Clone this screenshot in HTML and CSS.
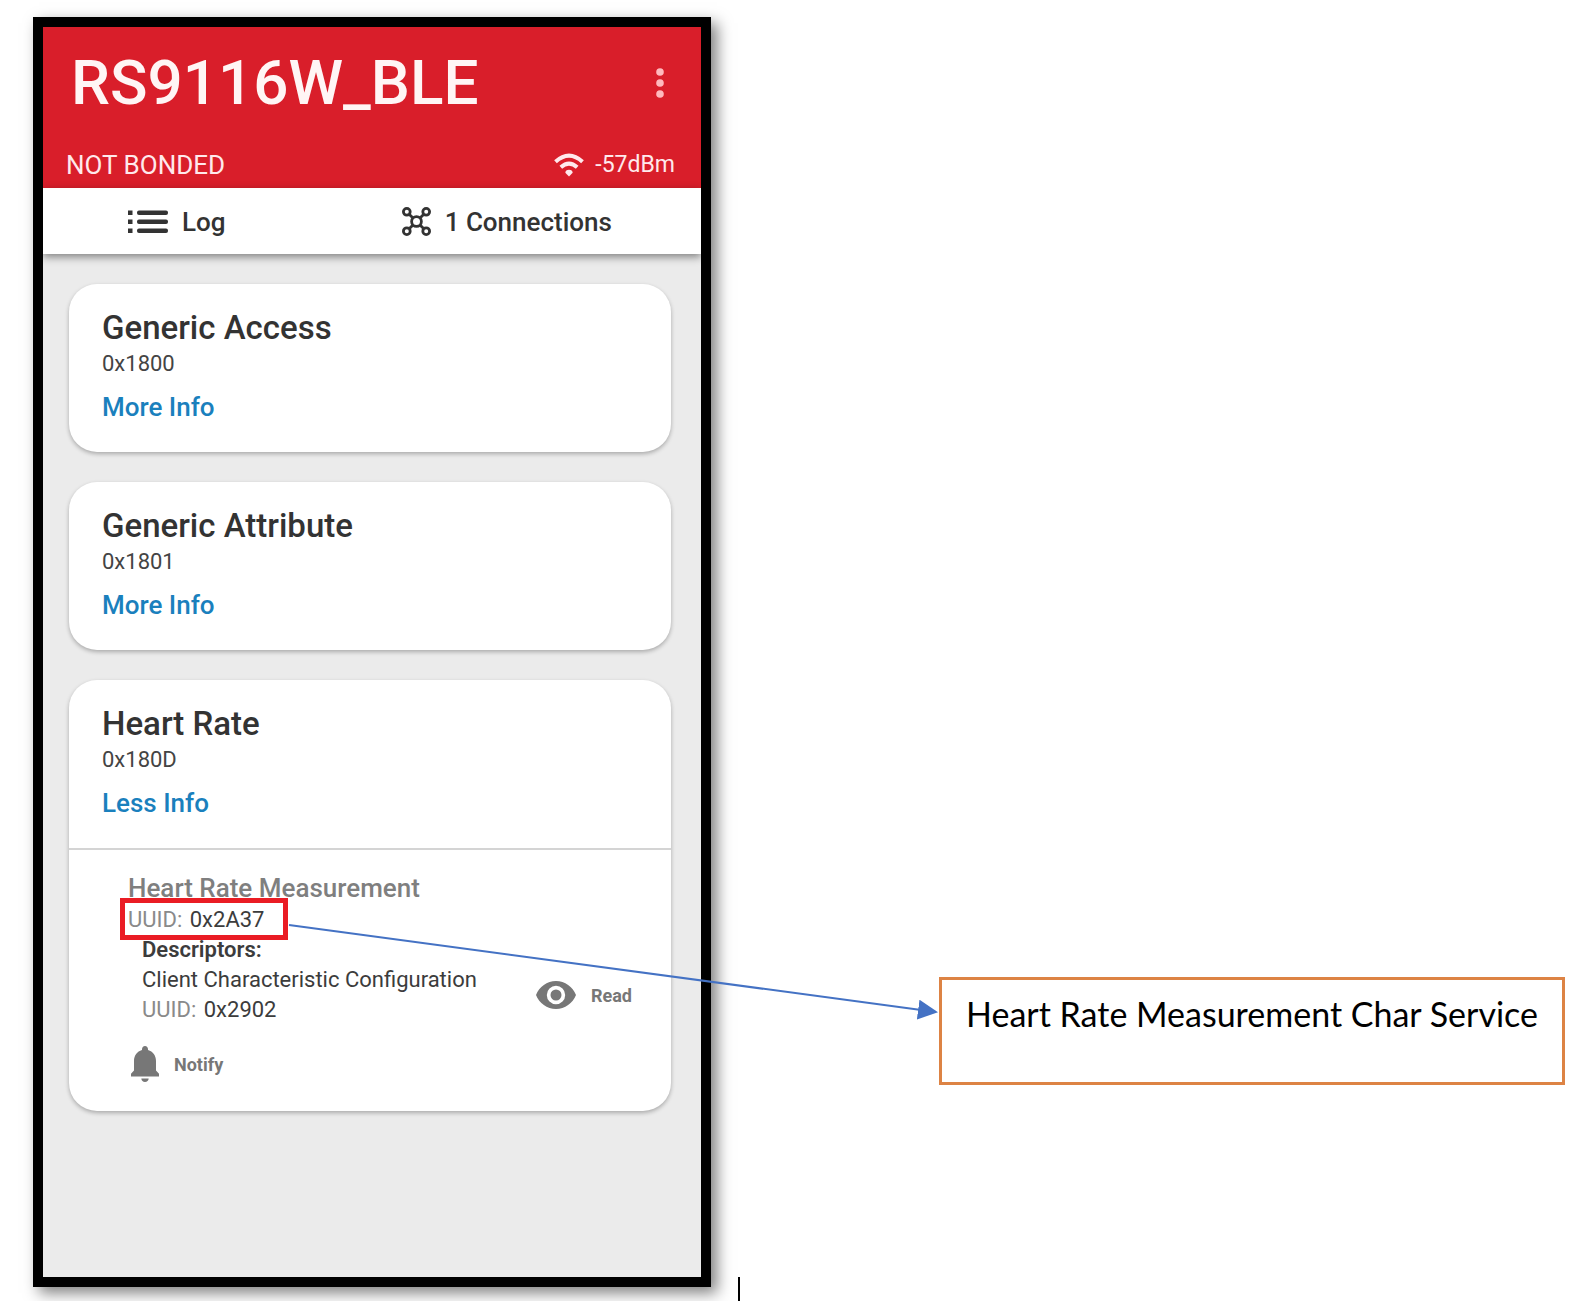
FILE: index.html
```html
<!DOCTYPE html>
<html lang="en">
<head>
<meta charset="utf-8">
<meta name="viewport" content="width=device-width, initial-scale=1">
<title>RS9116W_BLE</title>
<link rel="stylesheet" href="styles.css">
</head>
<body>
<main class="stage">
  <section class="phone">
    <header class="header">
      <div class="header-top">
        <h1 class="device">RS9116W_BLE</h1>
        <button class="menu" type="button" aria-label="More options">
          <svg width="8" height="32" viewBox="0 0 8 32" fill="currentColor"><circle cx="4" cy="5" r="3.8"/><circle cx="4" cy="16" r="3.8"/><circle cx="4" cy="27" r="3.8"/></svg>
        </button>
      </div>
      <div class="status">
        <span class="bond">NOT BONDED</span>
        <span class="signal">
          <svg width="30" height="24" viewBox="0 0 30 24" fill="none" stroke="currentColor" stroke-width="4"><path d="M1.500 8.700Q15-3.600 28.500 8.700"/><path d="M6.800 14.300Q15 7 23.200 14.300"/><path d="M15 23.500L11.300 19.800Q11.500 16.800 15 16.800Q18.500 16.800 18.700 19.800Z" fill="currentColor" stroke="none"/></svg>
          -57dBm
        </span>
      </div>
    </header>
    <nav class="tabs">
      <button class="tab" type="button">
        <svg width="40" height="24" viewBox="0 0 40 24" fill="currentColor"><path d="M0 .5h4.500v4.500H0zM0 9.500h4.500v4.500H0zM0 18.500h4.500v4.500H0z"/><rect x="9" y=".5" width="31" height="4.500" rx="2"/><rect x="9" y="9.500" width="31" height="4.500" rx="2"/><rect x="9" y="18.500" width="31" height="4.500" rx="2"/></svg>
        Log
      </button>
      <button class="tab" type="button">
        <svg width="29" height="29" viewBox="0 0 29 29" fill="none" stroke="currentColor" stroke-width="2.800"><circle cx="14.500" cy="14.500" r="4.900"/><circle cx="4.800" cy="4.800" r="3.400"/><circle cx="24.200" cy="4.800" r="3.400"/><circle cx="4.800" cy="24.200" r="3.400"/><circle cx="24.200" cy="24.200" r="3.400"/><path d="M7.200 7.200L11 11M21.800 7.200L18 11M7.200 21.800L11 18M21.800 21.800L18 18"/></svg>
        1 Connections
      </button>
    </nav>
    <div class="services">
      <article class="card">
        <div class="service">
          <h2 class="service-name">Generic Access</h2>
          <p class="service-id">0x1800</p>
          <button class="toggle" type="button">More Info</button>
        </div>
      </article>
      <article class="card">
        <div class="service">
          <h2 class="service-name">Generic Attribute</h2>
          <p class="service-id">0x1801</p>
          <button class="toggle" type="button">More Info</button>
        </div>
      </article>
      <article class="card">
        <div class="service">
          <h2 class="service-name">Heart Rate</h2>
          <p class="service-id">0x180D</p>
          <button class="toggle" type="button">Less Info</button>
        </div>
        <div class="characteristic">
          <h3 class="char-name">Heart Rate Measurement</h3>
          <p class="line marked"><span class="key">UUID:</span> 0x2A37</p>
          <div class="descriptors">
            <h4 class="line strong">Descriptors:</h4>
            <div class="descriptor">
              <div>
                <p class="line">Client Characteristic Configuration</p>
                <p class="line"><span class="key">UUID:</span> 0x2902</p>
              </div>
              <button class="action" type="button">
                <svg width="40" height="28" viewBox="0 0 40 28" fill="currentColor"><path fill-rule="evenodd" d="M20 0C11 0 3.300 5.800 0 14c3.300 8.200 11 14 20 14s16.700-5.800 20-14C36.700 5.800 29 0 20 0zm0 23.200a9.200 9.200 0 1 1 0-18.400 9.200 9.200 0 0 1 0 18.400zm0-14.700a5.500 5.500 0 1 0 0 11 5.500 5.500 0 0 0 0-11z"/></svg>
                Read
              </button>
            </div>
          </div>
          <button class="action notify" type="button">
            <svg width="28" height="36" viewBox="0 0 28 36" fill="currentColor"><path d="M14 0c1.800 0 3 1.300 3 3.200v.9c5 1.400 8 5.600 8 11v9.500l3 3.200v2.700H0v-2.700l3-3.200v-9.500c0-5.400 3-9.600 8-11v-.9C11 1.300 12.200 0 14 0zM10.300 32.500h7.400c-.2 2-1.600 3.500-3.700 3.500s-3.500-1.500-3.700-3.500z"/></svg>
            Notify
          </button>
        </div>
      </article>
    </div>
  </section>
  <span class="caret"></span>
  <div class="pointer">
    <svg class="arrow" aria-hidden="true">
      <defs><marker id="head" markerUnits="userSpaceOnUse" markerWidth="20" markerHeight="20" refX="18" refY="10" orient="auto"><path d="M0 0L20 10L0 20z" fill="#4472c4"/></marker></defs>
      <line x1="0" y1="1" x2="100%" y2="88" stroke="#4472c4" stroke-width="2" marker-end="url(#head)"/>
    </svg>
  </div>
  <aside class="callout">Heart Rate Measurement Char Service</aside>
</main>
</body>
</html>
```

FILE: styles.css
```css
* {
  box-sizing: border-box;
}

body {
  margin: 0;
  background: #fff;
  color: #333;
  font-family: Roboto, "Liberation Sans", sans-serif;
}

h1, h2, h3, h4, p {
  margin: 0;
}

button {
  padding: 0;
  border: 0;
  background: none;
  color: inherit;
  font: inherit;
  cursor: pointer;
}

svg {
  display: block;
  flex: none;
}

.stage {
  display: grid;
  grid-template-columns: minmax(0, 678fr) minmax(0, 228fr) minmax(0, 626fr);
  min-height: 100vh;
  padding: 17px 9px 0 33px;
}

.phone {
  grid-area: 1 / 1;
  display: flex;
  flex-direction: column;
  margin-bottom: 14px;
  border: 10px solid #000;
  background: #ebebeb;
  box-shadow: 6px 6px 14px rgba(0, 0, 0, 0.5);
}

.header {
  padding: 21px 26px 7px 23px;
  background: #d91e2a;
  color: #ffe9ec;
}

.header-top {
  display: flex;
  align-items: center;
  justify-content: space-between;
  padding: 0 11px 0 5px;
}

.device {
  color: #fff5f5;
  font-size: 62px;
  font-weight: 500;
  line-height: 70px;
}

.menu {
  color: #ffb9bd;
}

.status {
  display: flex;
  align-items: center;
  justify-content: space-between;
  margin-top: 31px;
  font-size: 26px;
  line-height: 32px;
}

.signal {
  display: flex;
  align-items: center;
  gap: 11px;
  font-size: 23px;
}

.tabs {
  position: relative;
  display: flex;
  justify-content: space-around;
  gap: 6px;
  height: 66px;
  padding: 1px 4px 0 0;
  background: #fff;
  box-shadow: 0 3px 8px rgba(0, 0, 0, 0.45);
}

.tab {
  display: flex;
  align-items: center;
  gap: 14px;
  font-size: 26px;
  font-weight: 500;
}

.services {
  display: flex;
  flex-direction: column;
  gap: 30px;
  padding: 30px 30px 30px 26px;
}

.card {
  border-radius: 28px;
  background: #fff;
  box-shadow: 0 2px 4px rgba(0, 0, 0, 0.28);
}

.service {
  padding: 22px 33px 30px;
}

.service-name {
  font-size: 33px;
  font-weight: 500;
  line-height: 44px;
}

.service-id {
  color: #444;
  font-size: 22px;
  line-height: 28px;
}

.toggle {
  display: block;
  margin-top: 14px;
  color: #1a80bd;
  font-size: 26px;
  font-weight: 500;
  line-height: 30px;
}

.characteristic {
  padding: 21px 39px 25px 59px;
  border-top: 2px solid #d4d4d4;
}

.char-name {
  color: #7f7f7f;
  font-size: 26px;
  font-weight: 500;
  line-height: 34px;
}

.line {
  color: #3c3c3c;
  font-size: 22px;
  font-weight: 400;
  line-height: 30px;
}

.strong {
  font-weight: 600;
}

.key {
  margin-right: 2px;
  color: #8a8a8a;
}

.marked {
  position: relative;
  width: fit-content;
}

/* Red frame drawn round the characteristic's UUID */
.marked::after {
  content: "";
  position: absolute;
  inset: -7px -24px -5px -8px;
  border: 5px solid #ea1c24;
}

.descriptors {
  padding-left: 14px;
}

.descriptor {
  display: flex;
  align-items: center;
  justify-content: space-between;
}

.action {
  display: flex;
  align-items: center;
  gap: 15px;
  color: #777;
  font-size: 18px;
  font-weight: 700;
}

.notify {
  height: 44px;
  margin-top: 17px;
  padding-left: 3px;
}

.caret {
  grid-area: 1 / 2;
  align-self: end;
  width: 2px;
  height: 24px;
  margin-left: 27px;
  background: #000;
}

/* Arrow from the framed UUID to the callout */
.pointer {
  grid-area: 1 / 1 / 2 / 3;
  position: relative;
  pointer-events: none;
}

.arrow {
  position: absolute;
  top: 907px;
  left: 256px;
  width: calc(100% - 259px);
  height: 100px;
  overflow: visible;
}

.callout {
  grid-area: 1 / 3;
  align-self: start;
  min-height: 108px;
  margin-top: 960px;
  padding: 13px 24px;
  border: 3px solid #dd8344;
  color: #000;
  font-family: Lato, "Open Sans", sans-serif;
  font-size: 34px;
  line-height: 42px;
}
```
